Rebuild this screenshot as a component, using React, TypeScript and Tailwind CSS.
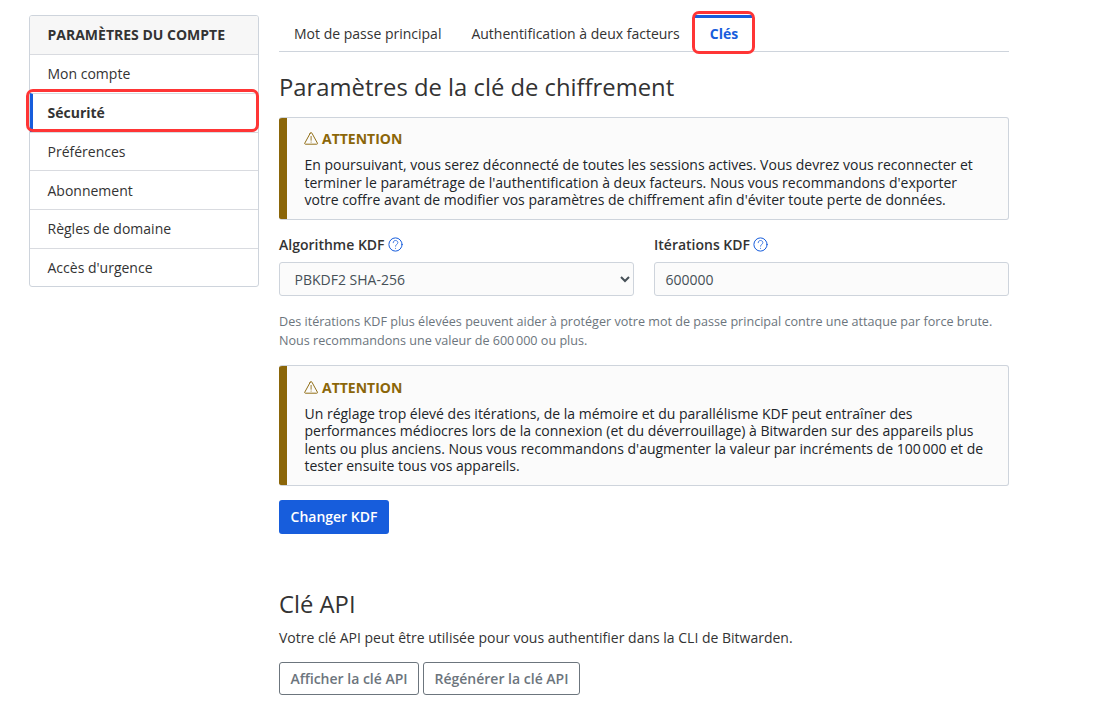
import type { ReactNode } from "react";

function WarningIcon() {
  return (
    <svg
      className="mr-[4px] -ml-[0.5px] h-[14px] w-[14px] shrink-0 overflow-visible"
      viewBox="0 0 14 14"
      fill="none"
      stroke="currentColor"
      strokeLinecap="round"
      strokeLinejoin="round"
    >
      <path d="M6.3 2.1.8 12.1c-.35.65.05 1.1.65 1.1h11.3c.6 0 1-.45.65-1.1L7.9 2.1c-.35-.6-1.25-.6-1.6 0Z" strokeWidth="0.95" />
      <path d="M7.1 5.4v3.9" strokeWidth="0.85" />
      <circle cx="7.1" cy="11" r="0.55" fill="currentColor" stroke="none" />
    </svg>
  );
}

function HelpIcon() {
  return (
    <svg
      className="ml-[3px] h-[15px] w-[15px] shrink-0 text-[#175ddc]"
      viewBox="0 0 15 15"
      fill="none"
      stroke="currentColor"
      strokeLinecap="round"
      strokeLinejoin="round"
    >
      <circle cx="7.5" cy="7.5" r="6.6" strokeWidth="1" />
      <path d="M5.2 5.7c0-1.4 1-2.2 2.3-2.2s2.35.85 2.35 2.05c0 1.7-2.3 1.8-2.3 3.65" strokeWidth="0.8" />
      <circle cx="7.55" cy="11.2" r="0.5" fill="currentColor" stroke="none" />
    </svg>
  );
}

function Callout({ children, className, bodyClass }: { children: ReactNode; className: string; bodyClass: string }) {
  return (
    <div
      className={`flex overflow-hidden rounded-[3px] border border-l-0 border-[#ced4dc] bg-[#fbfbfb] ${className}`}
    >
      <div className="-my-px w-2 shrink-0 bg-[#8b6609]" />
      <div className={`flex flex-col pl-[17.5px] ${bodyClass}`}>
        <h3 className="flex h-[18px] items-center font-bold text-[#8b6609]">
          <WarningIcon />
          ATTENTION
        </h3>
        <p className="leading-[17.5px] whitespace-nowrap text-[#212529]">{children}</p>
      </div>
    </div>
  );
}

const navItems = ["Mon compte", "Sécurité", "Préférences", "Abonnement", "Règles de domaine", "Accès d'urgence"];

function Sidebar() {
  return (
    <nav className="h-[272px] w-[230px] shrink-0 rounded-[3px] border border-[#ced4dc]">
      <div className="flex h-[38px] items-center rounded-t-[2px] bg-[#f7f7f7] pb-[2px] pl-[17.5px] font-bold">
        PARAMÈTRES DU COMPTE
      </div>
      {navItems.map((item) => {
        const active = item === "Sécurité";
        return (
          <div
            key={item}
            className={`relative flex h-[38.75px] items-center border-t border-[#d9dbe0] ${
              active ? "border-l-[3px] border-l-[#175ddc] pl-[14.5px] font-bold" : "pl-[17.5px]"
            }`}
          >
            {item}
            {active && (
              <span className="absolute -top-[5px] -left-[7px] h-[43px] w-[233px] rounded-[7px] border-[3px] border-[#ff3535]" />
            )}
          </div>
        );
      })}
    </nav>
  );
}

export default function App() {
  return (
    <div className="flex h-[720px] gap-5 overflow-hidden bg-white pt-[15px] pl-[29px] font-['Open_Sans',sans-serif] text-[14px] leading-[21px] text-[#333333]">
      <Sidebar />
      <main className="w-[730px]">
        <div className="flex h-[37px] border-b border-[#ced4dc] whitespace-nowrap">
          <div className="px-[15px] pt-2">Mot de passe principal</div>
          <div className="px-[15px] pt-2">Authentification à deux facteurs</div>
          <div className="relative h-[37px] border-t-[3px] border-[#175ddc] bg-white px-[15px] pt-[5px] font-bold text-[#175ddc]">
            Clés
            <span className="absolute -top-[7px] -left-[3px] h-[43px] w-[63px] rounded-[7px] border-[3px] border-[#ff3535]" />
          </div>
        </div>

        <h1 className="mt-5 h-[30px] text-[23.8px] leading-[30px]">Paramètres de la clé de chiffrement</h1>
        <Callout className="mt-[15px] h-[103px]" bodyClass="gap-[9px] pt-[11px]">
          En poursuivant, vous serez déconnecté de toutes les sessions actives. Vous devrez vous reconnecter et
          <br />
          terminer le paramétrage de l'authentification à deux facteurs. Nous vous recommandons d'exporter
          <br />
          votre coffre avant de modifier vos paramètres de chiffrement afin d'éviter toute perte de données.
        </Callout>

        <div className="mt-[14px] grid grid-cols-2 gap-5">
          <div>
            <label className="flex h-[21px] items-center font-semibold">
              Algorithme KDF
              <HelpIcon />
            </label>
            <div className="mt-[7px] flex h-[34px] items-center justify-between rounded-[3px] border border-[#ced4dc] bg-[#fbfbfb] pr-[3px] pl-[14.5px] text-[#465057]">
              PBKDF2 SHA-256
              <svg className="h-[10px] w-[10px]" viewBox="0 0 10 10" fill="none" stroke="currentColor" strokeWidth="2">
                <path d="m1 3 4 4 4-4" />
              </svg>
            </div>
          </div>
          <div>
            <label className="flex h-[21px] items-center font-semibold">
              Itérations KDF
              <HelpIcon />
            </label>
            <div className="mt-[7px] flex h-[34px] items-center rounded-[3px] border border-[#ced4dc] bg-[#fbfbfb] pl-[10.5px] text-[#465057]">
              600000
            </div>
          </div>
        </div>

        <p className="mt-4 h-[38px] text-[12.6px] leading-[19px] whitespace-nowrap text-[#6c757d]">
          Des itérations KDF plus élevées peuvent aider à protéger votre mot de passe principal contre une attaque par
          force brute.
          <br />
          Nous recommandons une valeur de 600{"\u202f"}000 ou plus.
        </p>

        <Callout className="mt-[15px] h-[121px]" bodyClass="gap-[8.5px] pt-3">
          Un réglage trop élevé des itérations, de la mémoire et du parallélisme KDF peut entraîner des
          <br />
          performances médiocres lors de la connexion (et du déverrouillage) à Bitwarden sur des appareils plus
          <br />
          lents ou plus anciens. Nous vous recommandons d'augmenter la valeur par incréments de 100{"\u202f"}000 et de
          <br />
          tester ensuite tous vos appareils.
        </Callout>

        <button className="mt-[14px] flex h-[34px] w-[110px] items-center justify-center rounded-[3px] bg-[#175ddc] pb-px font-semibold text-white">
          Changer KDF
        </button>

        <h2 className="mt-[55px] h-[30px] text-[23.8px] leading-[30px]">Clé API</h2>
        <p className="mt-2">Votre clé API peut être utilisée pour vous authentifier dans la CLI de Bitwarden.</p>
        <div className="mt-[14px] flex gap-1 font-semibold whitespace-nowrap text-[#6c757d]">
          <button className="h-[33px] w-[140px] rounded-[3px] border border-[#6c757d]">Afficher la clé API</button>
          <button className="h-[33px] w-[157px] rounded-[3px] border border-[#6c757d]">Régénérer la clé API</button>
        </div>
      </main>
    </div>
  );
}
